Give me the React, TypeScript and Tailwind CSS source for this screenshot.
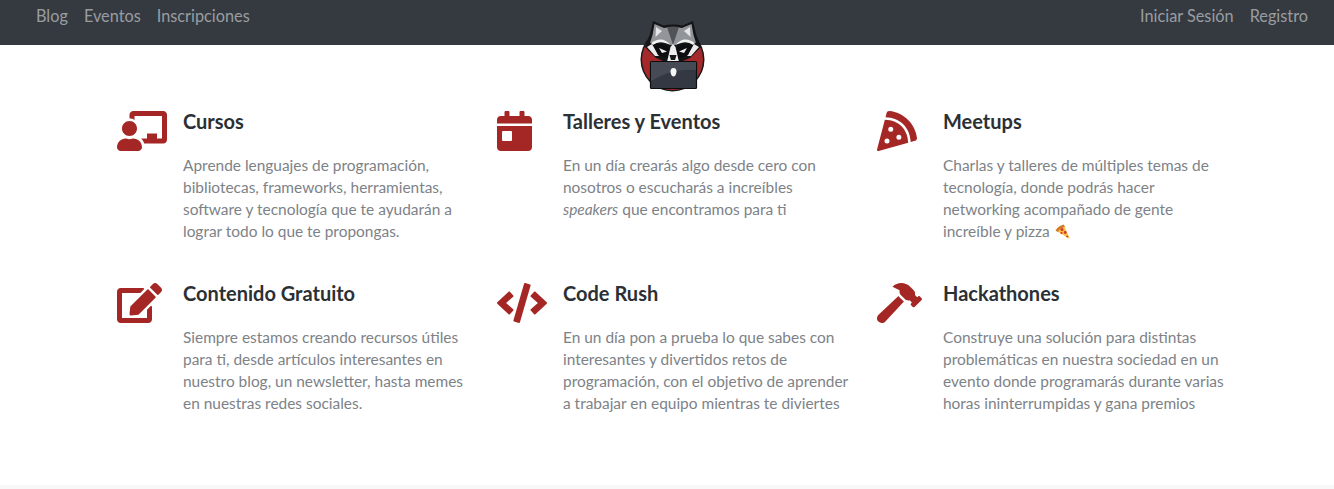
import React from 'react';
import { FaChalkboardTeacher, FaCalendarDay, FaPizzaSlice, FaEdit, FaCode, FaHammer } from 'react-icons/fa';

const PizzaEmoji = () => (
  <svg viewBox="0 0 16 16" className="ml-px inline-block h-4 w-4 align-[-3px]">
    <path d="M1.5 7 L9 1.5 L15 15 Z" fill="#f6c14b" />
    <path d="M0.5 6.5 Q3 2 8.5 0.5 L10 2.5 Q5.5 4 2.5 8 Z" fill="#d27a2c" />
    <circle cx="7" cy="5.5" r="1.5" fill="#d8342c" />
    <circle cx="6.5" cy="9" r="1.1" fill="#d8342c" />
    <circle cx="10.2" cy="8.5" r="1.4" fill="#d8342c" />
    <circle cx="12.2" cy="12.5" r="1" fill="#d8342c" />
  </svg>
);

// Drawn by hand, the original is a raster illustration
const RaccoonLogo = () => (
  <svg viewBox="0 0 70 74" className="h-[74px] w-[70px]">
    <circle cx="34.5" cy="41.5" r="32" fill="#1b1b1d" />
    <circle cx="34.5" cy="41.5" r="30.5" fill="#a5282a" />
    {/* head outline */}
    <path d="M15 3 L25.5 7.5 Q35 5.5 44.5 7.5 L55 3 L58 16 L63 29 L52 40 L40 45 L30 45 L18 40 L7 29 L12 16 Z" fill="#141517" />
    {/* fur */}
    <path d="M16.5 6 L26 10 Q35 8 44 10 L53.5 6 L55.5 17 L58 25 L46 22 L35 28 L24 22 L12 25 L14.5 17 Z" fill="#92959a" />
    <path d="M18 9 L24 13 L17.5 19 Z" fill="#e4e5e6" />
    <path d="M52 9 L46 13 L52.5 19 Z" fill="#e4e5e6" />
    <path d="M29 9 L35 27 L41 9 Q35 8 29 9 Z" fill="#505358" />
    {/* white brows and cheeks */}
    <path d="M13 25 Q24 17 33 27 L27 25 Q20 23 15 27 Z" fill="#f2f2f2" />
    <path d="M57 25 Q46 17 37 27 L43 25 Q50 23 55 27 Z" fill="#f2f2f2" />
    <path d="M9 29 L14 26 L21 38 L17 38 Z" fill="#ececec" />
    <path d="M61 29 L56 26 L49 38 L53 38 Z" fill="#ececec" />
    {/* eye mask */}
    <path d="M15 27 Q25 24 32.5 31 L30 41 L20 37 Z" fill="#0e0e10" />
    <path d="M55 27 Q45 24 37.5 31 L40 41 L50 37 Z" fill="#0e0e10" />
    <path d="M21 30 L29 33.5 L24 35 Z" fill="#f2f2f2" />
    <path d="M49 30 L41 33.5 L46 35 Z" fill="#f2f2f2" />
    {/* muzzle */}
    <path d="M32.5 29 L35 26 L37.5 29 L41 44 L29 44 Z" fill="#ededed" />
    <path d="M31.5 37 H38.5 L37 42 H33 Z" fill="#141517" />
    {/* laptop */}
    <rect x="12.5" y="43.5" width="46" height="27" rx="1" fill="#343842" stroke="#0d0e10" strokeWidth="1.2" />
    <path d="M13 44 H58 V52 Q34 50 13 63 Z" fill="#454a55" />
    <path d="M35.5 50 C37.5 50 38.5 51.5 38.5 53.5 C38.5 56.5 36.8 58.5 35.5 58.5 C34.2 58.5 32.5 56.5 32.5 53.5 C32.5 51.5 33.5 50 35.5 50 Z" fill="#f5f5f5" />
  </svg>
);

const features = [
  {
    icon: <FaChalkboardTeacher className="h-10 w-[50px]" />,
    title: 'Cursos',
    body: <>Aprende lenguajes de programación, bibliotecas, frameworks, herramientas, software y tecnología que te ayudarán a lograr todo lo que te propongas.</>,
  },
  {
    icon: <FaCalendarDay className="h-10 w-[35px]" />,
    title: 'Talleres y Eventos',
    body: <>En un día crearás algo desde cero con nosotros o escucharás a increíbles <em>speakers</em> que encontramos para ti</>,
  },
  {
    icon: <FaPizzaSlice className="h-10 w-10" />,
    title: 'Meetups',
    body: <>Charlas y talleres de múltiples temas de tecnología, donde podrás hacer networking acompañado de gente increíble y pizza <PizzaEmoji /></>,
  },
  {
    icon: <FaEdit className="h-10 w-[45px]" />,
    title: 'Contenido Gratuito',
    body: <>Siempre estamos creando recursos útiles para ti, desde artículos interesantes en nuestro blog, un newsletter, hasta memes en nuestras redes sociales.</>,
  },
  {
    icon: <FaCode className="h-10 w-[50px]" />,
    title: 'Code Rush',
    body: <>En un día pon a prueba lo que sabes con interesantes y divertidos retos de programación, con el objetivo de aprender a trabajar en equipo mientras te diviertes</>,
  },
  {
    icon: <FaHammer className="h-10 w-[45px]" />,
    title: 'Hackathones',
    body: <>Construye una solución para distintas problemáticas en nuestra sociedad en un evento donde programarás durante varias horas ininterrumpidas y gana premios</>,
  },
];

export default function App() {
  return (
    <div className="relative h-[489px] overflow-hidden bg-white font-['Lato','Noto_Sans',sans-serif]">
      {/* Navbar */}
      <nav className="flex h-[45px] items-start justify-between bg-[#343a40] pl-[28px] pr-[18px] pt-[4px] text-[16.3px] leading-6 text-[#9a9da0]">
        <div className="flex">
          <a className="px-2">Blog</a>
          <a className="px-2">Eventos</a>
          <a className="px-2">Inscripciones</a>
        </div>
        <div className="flex">
          <a className="px-2">Iniciar Sesión</a>
          <a className="px-2">Registro</a>
        </div>
      </nav>

      <div className="absolute left-[638px] top-[18px]">
        <RaccoonLogo />
      </div>

      {/* Features */}
      <main className="mx-auto grid w-[1140px] grid-cols-3 gap-y-[22px] pt-[62px]">
        {features.map((f) => (
          <div key={f.title} className="flex h-[150px] pl-5">
            <div className="w-[66px] shrink-0 pt-1 text-[#a52725]">{f.icon}</div>
            <div className="w-[285px]">
              <h3 className="text-[20px] font-bold leading-[28px] text-[#2b3035]">{f.title}</h3>
              <p className="mt-[19px] text-[15.45px] leading-[22px] text-[#7d8287]">{f.body}</p>
            </div>
          </div>
        ))}
      </main>

      <div className="absolute inset-x-0 bottom-0 h-1 bg-[#f8f8f8]" />
    </div>
  );
}
